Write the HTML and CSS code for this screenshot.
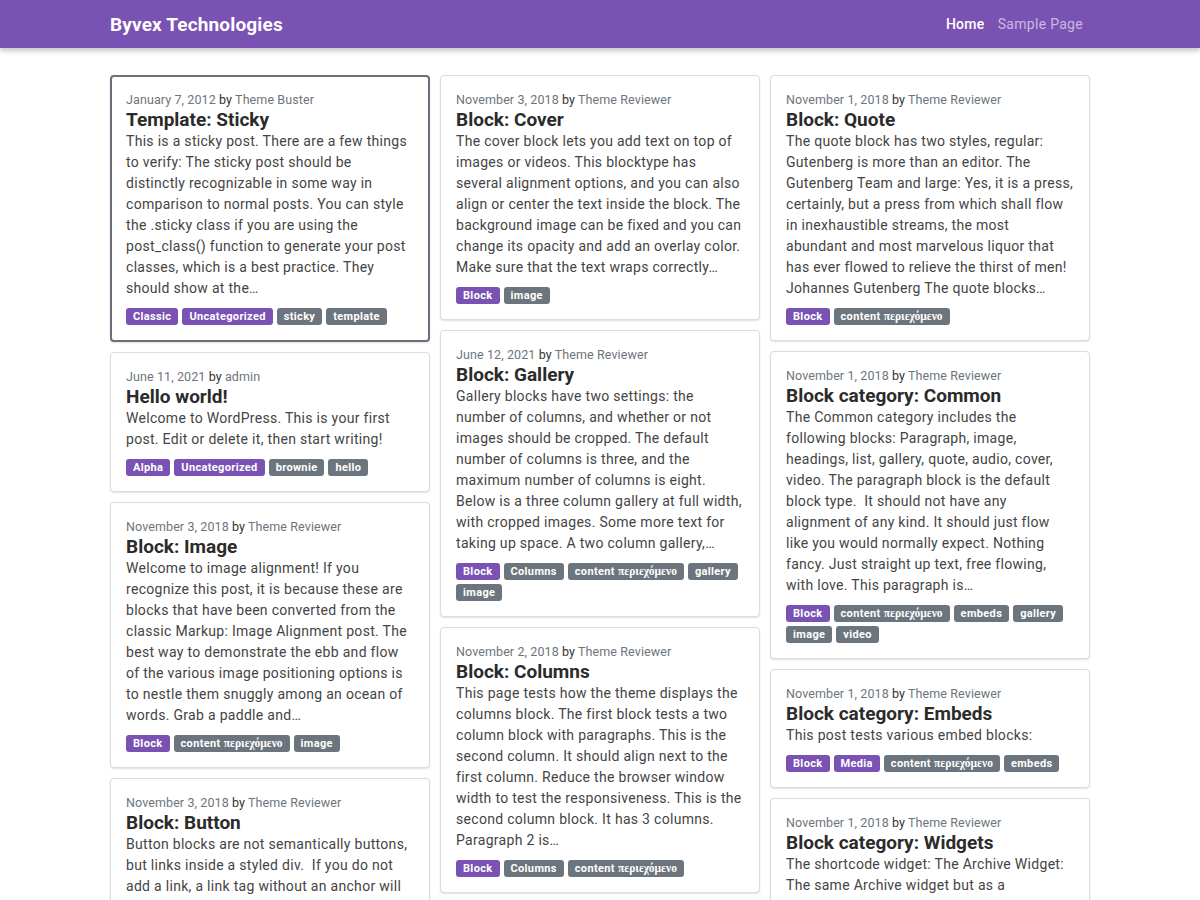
FILE: index.html
```html
<!DOCTYPE html>
<html lang="en">
<head>
<meta charset="utf-8">
<title>Byvex Technologies</title>
<link rel="stylesheet" href="styles.css">
</head>
<body>
<header class="topbar">
  <div class="topbar-inner">
    <a class="brand" href="#">Byvex Technologies</a>
    <nav class="nav">
      <a class="nav-link active" href="#">Home</a>
      <a class="nav-link" href="#">Sample Page</a>
    </nav>
  </div>
</header>
<main class="grid">
  <div class="col">
    <article class="card sticky">
      <div class="meta"><span class="muted">January 7, 2012</span> by <span class="muted">Theme Buster</span></div>
      <h2 class="title">Template: Sticky</h2>
      <p class="excerpt">This is a sticky post. There are a few things to verify: The sticky post should be distinctly recognizable in some way in comparison to normal posts. You can style the .sticky class if you are using the post_class() function to generate your post classes, which is a best practice. They should show at the…</p>
      <div class="tags"><span class="badge cat">Classic</span><span class="badge cat">Uncategorized</span><span class="badge tag">sticky</span><span class="badge tag">template</span></div>
    </article>
    <article class="card">
      <div class="meta"><span class="muted">June 11, 2021</span> by <span class="muted">admin</span></div>
      <h2 class="title">Hello world!</h2>
      <p class="excerpt">Welcome to WordPress. This is your first post. Edit or delete it, then start writing!</p>
      <div class="tags"><span class="badge cat">Alpha</span><span class="badge cat">Uncategorized</span><span class="badge tag">brownie</span><span class="badge tag">hello</span></div>
    </article>
    <article class="card">
      <div class="meta"><span class="muted">November 3, 2018</span> by <span class="muted">Theme Reviewer</span></div>
      <h2 class="title">Block: Image</h2>
      <p class="excerpt">Welcome to image alignment! If you recognize this post, it is because these are blocks that have been converted from the classic Markup: Image Alignment post. The best way to demonstrate the ebb and flow of the various image positioning options is to nestle them snuggly among an ocean of words. Grab a paddle and…</p>
      <div class="tags"><span class="badge cat">Block</span><span class="badge tag">content <span class="gr">περιεχόμενο</span></span><span class="badge tag">image</span></div>
    </article>
    <article class="card">
      <div class="meta"><span class="muted">November 3, 2018</span> by <span class="muted">Theme Reviewer</span></div>
      <h2 class="title">Block: Button</h2>
      <p class="excerpt">Button blocks are not semantically buttons, but links inside a styled div.&nbsp; If you do not add a link, a link tag without an anchor will be used. The button block has two styles, a fill and an outline…</p>
      <div class="tags"><span class="badge cat">Block</span><span class="badge tag">button</span></div>
    </article>
  </div>
  <div class="col">
    <article class="card">
      <div class="meta"><span class="muted">November 3, 2018</span> by <span class="muted">Theme Reviewer</span></div>
      <h2 class="title">Block: Cover</h2>
      <p class="excerpt">The cover block lets you add text on top of images or videos. This blocktype has several alignment options, and you can also align or center the text inside the block. The background image can be fixed and you can change its opacity and add an overlay color. Make sure that the text wraps correctly…</p>
      <div class="tags"><span class="badge cat">Block</span><span class="badge tag">image</span></div>
    </article>
    <article class="card">
      <div class="meta"><span class="muted">June 12, 2021</span> by <span class="muted">Theme Reviewer</span></div>
      <h2 class="title">Block: Gallery</h2>
      <p class="excerpt">Gallery blocks have two settings: the number of columns, and whether or not images should be cropped. The default number of columns is three, and the maximum number of columns is eight. Below is a three column gallery at full width, with cropped images. Some more text for taking up space. A two column gallery,…</p>
      <div class="tags"><span class="badge cat">Block</span><span class="badge tag">Columns</span><span class="badge tag">content <span class="gr">περιεχόμενο</span></span><span class="badge tag">gallery</span><span class="badge tag">image</span></div>
    </article>
    <article class="card">
      <div class="meta"><span class="muted">November 2, 2018</span> by <span class="muted">Theme Reviewer</span></div>
      <h2 class="title">Block: Columns</h2>
      <p class="excerpt">This page tests how the theme displays the columns block. The first block tests a two column block with paragraphs. This is the second column. It should align next to the first column. Reduce the browser window width to test the responsiveness. This is the second column block. It has 3 columns. Paragraph 2 is…</p>
      <div class="tags"><span class="badge cat">Block</span><span class="badge tag">Columns</span><span class="badge tag">content <span class="gr">περιεχόμενο</span></span></div>
    </article>
  </div>
  <div class="col">
    <article class="card">
      <div class="meta"><span class="muted">November 1, 2018</span> by <span class="muted">Theme Reviewer</span></div>
      <h2 class="title">Block: Quote</h2>
      <p class="excerpt">The quote block has two styles, regular: Gutenberg is more than an editor. The Gutenberg Team and large: Yes, it is a press, certainly, but a press from which shall flow in inexhaustible streams, the most abundant and most marvelous liquor that has ever flowed to relieve the thirst of men! Johannes Gutenberg The quote blocks…</p>
      <div class="tags"><span class="badge cat">Block</span><span class="badge tag">content <span class="gr">περιεχόμενο</span></span></div>
    </article>
    <article class="card">
      <div class="meta"><span class="muted">November 1, 2018</span> by <span class="muted">Theme Reviewer</span></div>
      <h2 class="title">Block category: Common</h2>
      <p class="excerpt">The Common category includes the following blocks: Paragraph, image, headings, list, gallery, quote, audio, cover, video. The paragraph block is the default block type.&nbsp; It should not have any alignment of any kind. It should just flow like you would normally expect. Nothing fancy. Just straight up text, free flowing, with love. This paragraph is…</p>
      <div class="tags"><span class="badge cat">Block</span><span class="badge tag">content <span class="gr">περιεχόμενο</span></span><span class="badge tag">embeds</span><span class="badge tag">gallery</span><span class="badge tag">image</span><span class="badge tag">video</span></div>
    </article>
    <article class="card">
      <div class="meta"><span class="muted">November 1, 2018</span> by <span class="muted">Theme Reviewer</span></div>
      <h2 class="title">Block category: Embeds</h2>
      <p class="excerpt">This post tests various embed blocks:</p>
      <div class="tags"><span class="badge cat">Block</span><span class="badge cat">Media</span><span class="badge tag">content <span class="gr">περιεχόμενο</span></span><span class="badge tag">embeds</span></div>
    </article>
    <article class="card">
      <div class="meta"><span class="muted">November 1, 2018</span> by <span class="muted">Theme Reviewer</span></div>
      <h2 class="title">Block category: Widgets</h2>
      <p class="excerpt">The shortcode widget: The Archive Widget: The same Archive widget but as a dropdown. The Audio widget. The Calendar widget. The Categories widget…</p>
      <div class="tags"><span class="badge cat">Block</span><span class="badge tag">widgets</span></div>
    </article>
  </div>
</main>
</body>
</html>
```

FILE: styles.css
```css
* { box-sizing: border-box; }

html, body {
  margin: 0;
  padding: 0;
}

body {
  background: #fff;
  font-family: Roboto, "Noto Sans", sans-serif;
  color: #333;
  font-size: 14px;
  line-height: 21px;
}

a { text-decoration: none; }

.topbar {
  background: #7952b3;
  height: 48px;
  box-shadow: 0 3px 5px rgba(0, 0, 0, 0.22);
  position: relative;
}

.topbar-inner {
  width: 980px;
  margin: 0 auto;
  height: 48px;
  display: flex;
  align-items: center;
  justify-content: space-between;
}

.brand {
  color: #fff;
  font-weight: 700;
  font-size: 19px;
  letter-spacing: 0.15px;
}

.nav {
  display: flex;
  gap: 13px;
  padding-right: 7px;
}

.nav-link {
  color: rgba(255, 255, 255, 0.6);
  font-size: 14px;
  letter-spacing: 0.3px;
}

.nav-link.active { color: #fff; font-weight: 500; }

.grid {
  width: 980px;
  margin: 27px auto 0;
  display: flex;
  gap: 10px;
  align-items: flex-start;
}

.col {
  flex: 1 1 0;
  display: flex;
  flex-direction: column;
  gap: 10px;
  min-width: 0;
}

.card {
  border: 1px solid #dcdcdc;
  border-radius: 4px;
  padding: 15px;
  background: #fff;
  box-shadow: 0 1px 2px rgba(0, 0, 0, 0.12);
}

.card.sticky {
  border: 2px solid #6f6d7c;
  padding: 14px 14px 15px;
}

.meta {
  font-size: 12.5px;
  line-height: 18px;
  letter-spacing: 0.1px;
  color: #333;
}

.muted { color: #6c757d; }

.title {
  margin: 0;
  font-size: 19px;
  line-height: 22px;
  font-weight: 700;
  color: #2b2b2b;
}

.excerpt {
  margin: 0;
  color: #444;
  letter-spacing: 0.3px;
}

.tags {
  display: flex;
  flex-wrap: wrap;
  gap: 4px;
  margin-top: 9px;
}

.badge {
  display: inline-block;
  font-size: 11px;
  line-height: 11px;
  font-weight: 700;
  letter-spacing: 0.35px;
  padding: 3px 7px;
  border-radius: 3px;
  color: #fff;
}

.badge.cat { background: #7952b3; }
.badge.tag { background: #6c757d; }

.gr { font-family: "Liberation Serif", serif; font-size: 11.5px; letter-spacing: 0; }
```
